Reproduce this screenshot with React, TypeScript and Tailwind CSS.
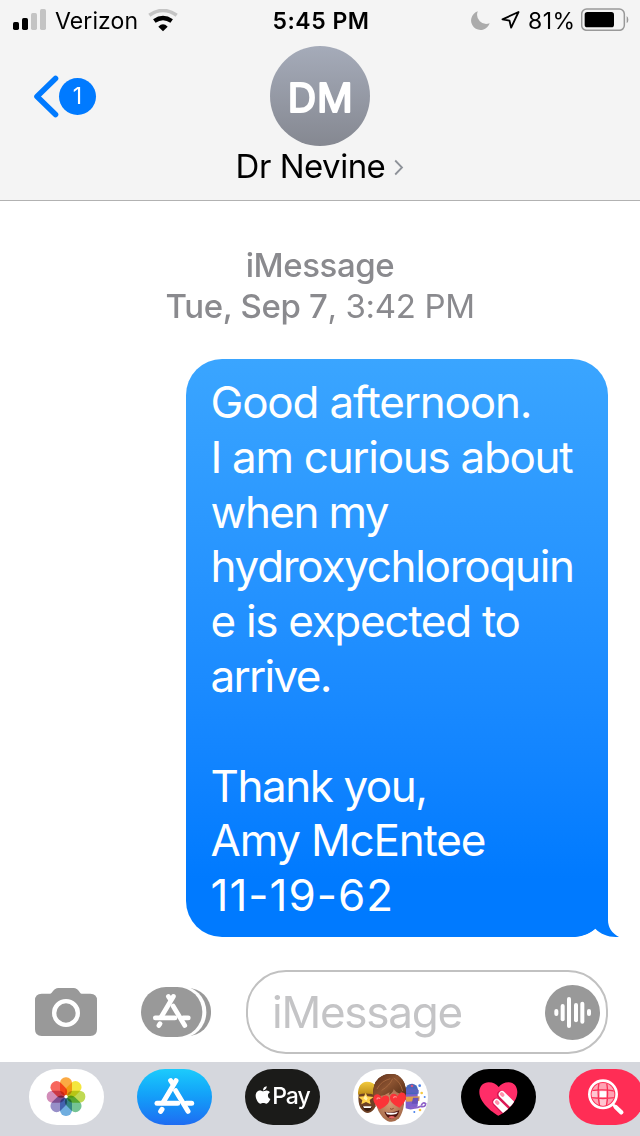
import type { ReactNode } from 'react';
import { FaApple } from 'react-icons/fa';

const messageLines = [
  { text: 'Good afternoon.', tracking: 'tracking-[-1.2px]' },
  { text: 'I am curious about', tracking: 'tracking-[-1.3px]' },
  { text: 'when my', tracking: 'tracking-[-1.6px]' },
  { text: 'hydroxychloroquin', tracking: 'tracking-[-1.3px]' },
  { text: 'e is expected to', tracking: 'tracking-[-1.3px]' },
  { text: 'arrive.', tracking: 'tracking-[-1.7px]' },
  { text: '', tracking: '' },
  { text: 'Thank you,', tracking: 'tracking-[-1.45px]' },
  { text: 'Amy McEntee', tracking: 'tracking-[-1.2px]' },
  { text: '11-19-62', tracking: 'tracking-[1px]' },
];

const petals = [
  { angle: 0, color: '#fb9a22' },
  { angle: 45, color: '#f3e31c' },
  { angle: 90, color: '#b4d334' },
  { angle: 135, color: '#5cb981' },
  { angle: 180, color: '#57a0da' },
  { angle: 225, color: '#857bbf' },
  { angle: 270, color: '#ca79ad' },
  { angle: 315, color: '#f64b40' },
];

const StatusBar = () => (
  <div className="flex h-10 items-center pl-[13px] pr-[11px] text-[23px] leading-none text-black">
    <div className="flex flex-1 items-center">
      <svg width="33" height="21" viewBox="0 0 99 63" className="mt-[-1px]">
        <rect x="0" y="39" width="18" height="24" rx="5" fill="#000" />
        <rect x="27" y="27" width="18" height="36" rx="5" fill="#000" />
        <rect x="54" y="12" width="18" height="51" rx="5" fill="#c4c4c4" />
        <rect x="81" y="0" width="18" height="63" rx="5" fill="#c4c4c4" />
      </svg>
      <span className="ml-[9px] mt-[2px] w-[84px] whitespace-nowrap tracking-[0.1px]">Verizon</span>
      <svg width="30" height="23" viewBox="0 0 90 69" className="ml-[9px]" fill="none">
        <path d="M4 19Q45 -10 86 19" stroke="#c4c4c4" strokeWidth="11" />
        <path d="M19 36Q45 18 71 36" stroke="#000" strokeWidth="13" />
        <path d="M31 53Q45 39 59 53L45 67Z" fill="#000" />
      </svg>
    </div>
    <span className="mt-[2px] font-semibold tracking-[0.5px]">5:45 PM</span>
    <div className="flex flex-1 items-center justify-end">
      <svg width="19" height="19" viewBox="0 0 56 56">
        <path d="M20 1A28 28 0 1 0 55 36A27 27 0 0 1 20 1Z" fill="#ababab" />
      </svg>
      <svg width="19" height="18" viewBox="0 0 56 54" className="ml-[11px]" fill="none">
        <path d="M52 3L4 25L25 29L30 50Z" stroke="#000" strokeWidth="5.5" strokeLinejoin="round" />
      </svg>
      <span className="ml-[8px] mt-[2px] w-[48px] whitespace-nowrap tracking-[0.5px]">81%</span>
      <svg width="48" height="23" viewBox="0 0 144 69" className="ml-[5px] mt-[-1px]">
        <rect x="2" y="3" width="128" height="64" rx="15" fill="none" stroke="#999" strokeWidth="4.5" />
        <rect x="11" y="12" width="88" height="46" rx="8" fill="#000" />
        <path d="M137 24Q142 27 142 35Q142 43 137 46Z" fill="#999" />
      </svg>
    </div>
  </div>
);

const ConversationHeader = () => (
  <header className="h-[201px] border-b border-[#b2b2b2] bg-[#f4f4f4]">
    <StatusBar />
    <div className="grid grid-cols-3 pt-1.5">
      <button className="ml-[33px] mt-[29px] flex h-[43px] items-center">
        <svg width="26" height="43" viewBox="0 0 26 43" fill="none">
          <path d="M22.5 3.5L4 21.5L22.5 39.5" stroke="#007aff" strokeWidth="5.6" strokeLinecap="round" strokeLinejoin="round" />
        </svg>
        <span className="flex h-[37px] w-[37px] items-center justify-center rounded-full bg-[#007aff] text-[23px] leading-none text-white">
          1
        </span>
      </button>
      <div className="flex flex-col items-center">
        <svg width="100" height="100" viewBox="0 0 100 100">
          <defs>
            <linearGradient id="avatar" x1="0" y1="0" x2="0" y2="1">
              <stop offset="0" stopColor="#a5abb9" />
              <stop offset="1" stopColor="#858891" />
            </linearGradient>
          </defs>
          <circle cx="50" cy="50" r="50" fill="url(#avatar)" />
          <text
            x="50.5" y="66" textAnchor="middle" fontSize="39.5" letterSpacing="0.6"
            fill="#fff" stroke="#fff" strokeWidth="2" strokeLinejoin="round"
          >
            DM
          </text>
        </svg>
        <div className="flex h-10 items-center text-[33px] leading-none text-black">
          <span className="whitespace-nowrap tracking-[-0.5px]">Dr Nevine</span>
          <svg width="10" height="17" viewBox="0 0 10 17" className="ml-[9px] mt-[3px]" fill="none">
            <path d="M1.2 1.5L8 8.5L1.2 15.5" stroke="#8e9299" strokeWidth="1.8" />
          </svg>
        </div>
      </div>
    </div>
  </header>
);

const Bubble = () => (
  <div className="relative ml-[186px] mt-8 w-[422px] rounded-[36px] bg-linear-to-b from-[#3aa5ff] to-[#007aff] to-90% pb-[14px] pl-[24.5px] pt-[16px] text-[44px] leading-[54.8px] text-white">
    {messageLines.map((line, i) => (
      <p key={i} className={`h-[54.8px] whitespace-nowrap ${line.tracking}`}>{line.text}</p>
    ))}
    {/* Tail */}
    <svg width="47" height="37" viewBox="0 0 141 111" className="absolute -right-[11px] bottom-0">
      <path d="M0 0H108V60C108 83 120 100 141 111C112 112 88 104 70 86C50 103 25 111 0 111Z" fill="#007aff" />
    </svg>
  </div>
);

const AppStoreGlyph = () => (
  <g fill="none" stroke="#fff" strokeWidth="15" strokeLinecap="round">
    <path d="M117 35L79 99" />
    <path d="M101 35L108 45" />
    <path d="M116 65L153 127" />
    <path d="M60 103H122" />
    <path d="M148 103H164" />
    <path d="M75 121L71 127" />
  </g>
);

const InputBar = () => (
  <div className="flex h-[92px] items-start pl-[35px]">
    <svg width="62" height="48" viewBox="0 0 186 144" className="mt-[18px]">
      <path
        d="M20 17H45C53 17 55 0 70 0H116C131 0 133 17 140 17H166Q186 17 186 37V124Q186 144 166 144H20Q0 144 0 124V37Q0 17 20 17Z"
        fill="#999"
      />
      <circle cx="93" cy="75" r="35.5" fill="none" stroke="#fff" strokeWidth="13" />
    </svg>
    <svg width="70" height="50" viewBox="0 0 210 150" className="ml-[44px] mt-[17px]">
      <rect x="60" y="3" width="150" height="144" rx="70" fill="#999" />
      <rect x="10" y="-4" width="186" height="158" rx="78" fill="#fefefe" />
      <rect width="184" height="150" rx="75" fill="#999" />
      <g transform="translate(-14 -5) scale(.95)">
        <AppStoreGlyph />
      </g>
    </svg>
    <div className="ml-[35px] flex h-[84px] w-[362px] items-center justify-between rounded-[40px] border-2 border-[#c1c1c1] pl-[24px] pr-[6px]">
      <span className="text-[44px] leading-none tracking-[-1.25px] text-[#c4c4c6]">iMessage</span>
      <svg width="55" height="55" viewBox="0 0 165 165">
        <circle cx="82.5" cy="82.5" r="82.5" fill="#999" />
        <g stroke="#fff" strokeWidth="12" strokeLinecap="round">
          <path d="M34 78V87" />
          <path d="M53 63V103" />
          <path d="M72 42V123" />
          <path d="M93 60V106" />
          <path d="M112 56V110" />
          <path d="M132 78V87" />
        </g>
      </svg>
    </div>
  </div>
);

const Pill = ({ className, children }: { className: string; children: ReactNode }) => (
  <div className={`flex h-14 w-[75px] shrink-0 items-center justify-center overflow-hidden rounded-[28px] ${className}`}>
    {children}
  </div>
);

const PillArt = ({ children }: { children: ReactNode }) => (
  <svg width="75" height="56" viewBox="0 0 225 168">{children}</svg>
);

const PhotosIcon = () => (
  <PillArt>
    <g transform="translate(111 83)" className="isolate">
      {petals.map((petal) => (
        <rect
          key={petal.angle}
          x="-18" y="-58" width="36" height="55" rx="17"
          fill={petal.color}
          className="opacity-85 mix-blend-multiply"
          transform={`rotate(${petal.angle})`}
        />
      ))}
      <circle r="5" fill="#fff" />
    </g>
  </PillArt>
);

const MemojiIcon = () => (
  <PillArt>
    <defs>
      <radialGradient id="face" cx=".5" cy=".45" r=".6">
        <stop offset="0" stopColor="#d79a74" />
        <stop offset="1" stopColor="#a06545" />
      </radialGradient>
      <linearGradient id="hair" x1="0" y1="0" x2="1" y2="1">
        <stop offset="0" stopColor="#5e301b" />
        <stop offset=".45" stopColor="#8a5230" />
        <stop offset="1" stopColor="#47240f" />
      </linearGradient>
      <linearGradient id="beanie" x1="0" y1="0" x2="0" y2="1">
        <stop offset="0" stopColor="#f2ca3e" />
        <stop offset="1" stopColor="#b98715" />
      </linearGradient>
      <path id="eye" d="M0 19C-14 9 -21 2 -20 -8C-19 -18 -5 -20 0 -9C5 -20 19 -18 20 -8C21 2 14 9 0 19Z" />
    </defs>
    {/* Left character */}
    <path d="M17 72Q14 103 23 118Q33 132 45 132Q60 130 68 112V70Z" fill="#6d4024" />
    <path d="M15 77Q14 40 42 38Q60 38 71 52V80Q43 68 15 77Z" fill="url(#beanie)" />
    <path d="M27 110Q42 117 58 110Q55 126 43 126Q31 123 27 110Z" fill="#381a10" />
    <path d="M30 112H56L53 117H33Z" fill="#fff" />
    <path d="M38 71L43 82L62 84L50 93L53 106L39 99L25 106L28 94L16 83L33 82Z" fill="#ffd04a" />
    <path d="M37 79L44 88L40 95L31 88Z" fill="#fff3ad" />
    {/* Right character */}
    <path d="M158 66Q178 60 194 69L194 112Q178 127 158 118Z" fill="#7d60cc" />
    <path d="M156 62Q162 43 178 44Q193 46 195 62L194 76L158 76Z" fill="#4666bb" />
    <path d="M156 60Q180 54 197 63V74Q179 69 156 74Z" fill="#5a62c0" />
    <path d="M158 83L200 82L199 96L160 98Z" fill="#e2a04a" />
    <path d="M180 86L197 86L194 104L176 104Z" fill="#6a51b8" />
    <path d="M172 113Q187 121 203 112Q218 115 218 104Q210 98 205 109" fill="none" stroke="#8e61c8" strokeWidth="5" />
    <circle cx="177" cy="51" r="4" fill="#d75382" />
    <circle cx="200" cy="50" r="4" fill="#4781eb" />
    <circle cx="206" cy="72" r="4" fill="#f6c943" />
    <circle cx="215" cy="84" r="3" fill="#5288ee" />
    <circle cx="201" cy="123" r="4" fill="#f5bd3d" />
    <circle cx="184" cy="129" r="3" fill="#4781eb" />
    {/* Center character */}
    <path d="M61 78Q58 46 77 28Q95 13 115 15Q134 12 149 33Q163 51 158 92L68 98Z" fill="#4f2813" />
    <path d="M68 60V102Q74 128 90 146Q115 170 138 148Q149 134 153 106V60Z" fill="url(#face)" />
    <path d="M61 80Q58 46 77 28Q95 13 115 15Q134 12 149 33Q162 51 157 88L151 92Q151 78 144 66L142 74Q130 72 122 60Q120 72 107 78L110 70Q96 80 78 82L69 96Z" fill="url(#hair)" />
    <path d="M72 60Q84 36 112 29M86 64Q110 50 119 29M122 27Q142 38 149 66" fill="none" stroke="#a96b42" strokeWidth="2.5" />
    <path d="M94 128Q117 134 139 124Q135 149 114 149Q100 146 94 128Z" fill="#51150f" />
    <path d="M98 130Q118 134 135 128L130 135Q115 139 102 136Z" fill="#fff" />
    <path d="M106 145Q116 137 127 145Q116 153 106 145Z" fill="#e86462" />
    <path d="M111 119Q116 123 122 118" fill="none" stroke="#88492e" strokeWidth="3" />
    <use href="#eye" transform="translate(84 98) rotate(8) scale(1.2 1.25)" fill="#fb3338" />
    <use href="#eye" transform="translate(136 93) rotate(-8) scale(1.2 1.25)" fill="#fb3338" />
    <path d="M72 90Q74 85 80 88M122 86Q124 81 130 84" fill="none" stroke="#ff8983" strokeWidth="4" strokeLinecap="round" />
  </PillArt>
);

const HeartIcon = () => {
  const heart = 'M112 140C92 129 55 100 55 69C55 51 68 40 83 40C96 40 106 46 113 54C120 45 131 40 143 40C159 40 169 53 169 69C169 100 134 129 112 140Z';
  return (
    <PillArt>
      <clipPath id="heart">
        <path d={heart} />
      </clipPath>
      <path d={heart} fill="#ff2d68" />
      <g clipPath="url(#heart)" strokeLinecap="round">
        <path d="M120 77L167 122M106 99L149 143" stroke="#d51752" strokeWidth="25" />
        <path d="M123 76L172 125" stroke="#fff" strokeWidth="20" />
        <path d="M107 99L152 144" stroke="#fff" strokeWidth="20" />
        <path d="M122 75L125 78M107 99L110 102" stroke="#ff91ac" strokeWidth="11" />
      </g>
    </PillArt>
  );
};

const SearchIcon = () => (
  <PillArt>
    <clipPath id="lens">
      <circle cx="102" cy="76" r="34" />
    </clipPath>
    <g clipPath="url(#lens)">
      <rect x="66" y="40" width="72" height="72" fill="#ffa2b3" />
      <path d="M92 64H113V85H92ZM67 65H90V85H67ZM93 87H112V111H93Z" fill="#ffc7d1" />
      <path d="M93 67H111V84H93Z" fill="#fff" />
      <path d="M66 65Q102 60 138 66M66 86Q102 91 138 86M90 40Q84 76 92 112M113 40Q119 76 112 112" fill="none" stroke="#f92f55" strokeWidth="4" />
    </g>
    <circle cx="102" cy="76" r="41" fill="none" stroke="#fff" strokeWidth="8" />
    <path d="M131 106L139 113" stroke="#fff" strokeWidth="8" />
    <path d="M140 114L157 130" stroke="#fff" strokeWidth="13" strokeLinecap="round" />
  </PillArt>
);

const AppDrawer = () => (
  <nav className="flex h-[74px] gap-[33px] overflow-hidden bg-[#d5d7dd] pl-[29px] pt-[6.5px]">
    <Pill className="bg-white"><PhotosIcon /></Pill>
    <Pill className="bg-linear-to-b from-[#1dcbfc] to-[#1f6cf2]">
      <PillArt><AppStoreGlyph /></PillArt>
    </Pill>
    <Pill className="bg-[#1b1b19] text-white">
      <FaApple size={20} className="-ml-[2px] mt-[-4px]" />
      <span className="-ml-px mt-[-1px] text-[23px] font-medium leading-none tracking-[-1px]">Pay</span>
    </Pill>
    <Pill className="bg-white"><MemojiIcon /></Pill>
    <Pill className="bg-black"><HeartIcon /></Pill>
    <Pill className="bg-[#ff2d55]"><SearchIcon /></Pill>
  </nav>
);

const App = () => (
  <div className="flex h-[1136px] w-[640px] flex-col overflow-hidden bg-white font-['Inter','Liberation_Sans',sans-serif]">
    <ConversationHeader />
    <main className="flex-1 pt-[44px]">
      <div className="text-center text-[33px] font-medium leading-[41px] text-[#8a8a8e]">
        <p className="tracking-[-0.4px]">iMessage</p>
        <p className="tracking-[-0.35px]">
          Tue, Sep 7<span className="font-normal">, 3:42 PM</span>
        </p>
      </div>
      <Bubble />
    </main>
    <InputBar />
    <AppDrawer />
  </div>
);

export default App;
